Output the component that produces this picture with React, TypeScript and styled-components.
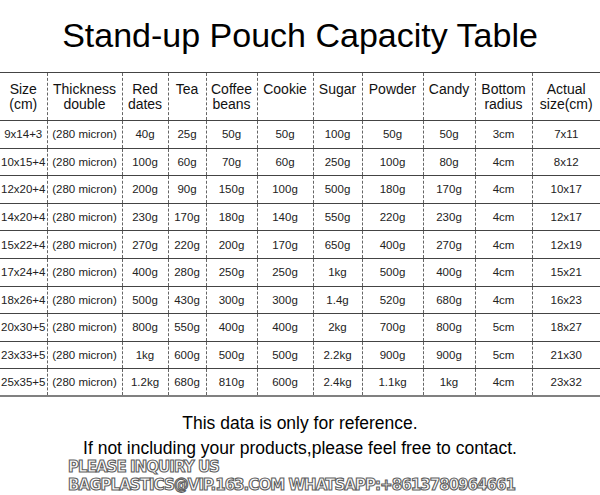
import React from 'react';
import styled, { createGlobalStyle } from 'styled-components';

const GlobalStyle = createGlobalStyle`
  html, body {
    margin: 0;
    padding: 0;
    background: #ffffff;
  }
  body {
    font-family: 'Liberation Sans', Arial, sans-serif;
    color: #111;
  }
`;

const Page = styled.div`
  width: 600px;
  height: 495px;
  overflow: hidden;
`;

const Title = styled.h1`
  margin: 0;
  padding-top: 15px;
  height: 57px;
  font-size: 34px;
  line-height: 40px;
  font-weight: normal;
  text-align: center;
  color: #000;
`;

const Table = styled.table`
  width: 600px;
  table-layout: fixed;
  border-collapse: collapse;
  border-top: 1px solid #444;
  border-bottom: 2px solid #808080;
`;

const HeadRow = styled.tr`
  height: 48px;
`;

const Row = styled.tr`
  height: 27.6px;
`;

const HeadCell = styled.th<{ $first?: boolean }>`
  padding: 9px 0 0;
  vertical-align: top;
  font-size: 14px;
  line-height: 15px;
  font-weight: normal;
  color: #111;
  text-align: center;
  border-left: ${(p) => (p.$first ? 'none' : '1px dashed #666')};
  border-bottom: 1px solid #444;
  white-space: nowrap;
`;

const Cell = styled.td<{ $first?: boolean }>`
  padding: 0;
  font-size: 11.5px;
  line-height: 14px;
  color: #222;
  text-align: center;
  vertical-align: middle;
  white-space: nowrap;
  border-left: ${(p) => (p.$first ? 'none' : '1px dashed #666')};
  border-top: 1px solid #444;
`;

const Notes = styled.div`
  margin-top: 17px;
  display: flex;
  flex-direction: column;
  align-items: center;
  gap: 7px;
`;

const Note = styled.p`
  margin: 0;
  font-size: 17.5px;
  line-height: 18px;
  color: #000;
`;

const Watermark = styled.div`
  margin-top: 3px;
  padding-left: 68px;
  display: flex;
  flex-direction: column;
  align-items: flex-start;
  gap: 4px;
`;

const MarkLine = styled.span`
  font-family: 'DejaVu Sans', sans-serif;
  font-weight: bold;
  font-size: 15px;
  line-height: 14px;
  letter-spacing: -0.95px;
  color: #ffffff;
  -webkit-text-stroke: 1.1px #5f5f5f;
  white-space: nowrap;
`;

const widths = [47, 75, 46, 38, 51, 56, 49, 61, 52, 57, 68];

const headers = [
  ['Size', '(cm)'],
  ['Thickness', 'double'],
  ['Red', 'dates'],
  ['Tea'],
  ['Coffee', 'beans'],
  ['Cookie'],
  ['Sugar'],
  ['Powder'],
  ['Candy'],
  ['Bottom', 'radius'],
  ['Actual', 'size(cm)'],
];

const rows = [
  ['9x14+3', '40g', '25g', '50g', '50g', '100g', '50g', '50g', '3cm', '7x11'],
  ['10x15+4', '100g', '60g', '70g', '60g', '250g', '100g', '80g', '4cm', '8x12'],
  ['12x20+4', '200g', '90g', '150g', '100g', '500g', '180g', '170g', '4cm', '10x17'],
  ['14x20+4', '230g', '170g', '180g', '140g', '550g', '220g', '230g', '4cm', '12x17'],
  ['15x22+4', '270g', '220g', '200g', '170g', '650g', '400g', '270g', '4cm', '12x19'],
  ['17x24+4', '400g', '280g', '250g', '250g', '1kg', '500g', '400g', '4cm', '15x21'],
  ['18x26+4', '500g', '430g', '300g', '300g', '1.4g', '520g', '680g', '4cm', '16x23'],
  ['20x30+5', '800g', '550g', '400g', '400g', '2kg', '700g', '800g', '5cm', '18x27'],
  ['23x33+5', '1kg', '600g', '500g', '500g', '2.2kg', '900g', '900g', '5cm', '21x30'],
  ['25x35+5', '1.2kg', '680g', '810g', '600g', '2.4kg', '1.1kg', '1kg', '4cm', '23x32'],
];

const App: React.FC = () => {
  return (
    <Page>
      <GlobalStyle />
      <Title>Stand-up Pouch Capacity Table</Title>
      <Table>
        <colgroup>
          {widths.map((w, i) => (
            <col key={i} style={{ width: w }} />
          ))}
        </colgroup>
        <thead>
          <HeadRow>
            {headers.map((h, i) => (
              <HeadCell key={i} $first={i === 0}>
                {h.map((line, j) => (
                  <React.Fragment key={j}>
                    {j > 0 && <br />}
                    {line}
                  </React.Fragment>
                ))}
              </HeadCell>
            ))}
          </HeadRow>
        </thead>
        <tbody>
          {rows.map((r, i) => (
            <Row key={i}>
              <Cell $first>{r[0]}</Cell>
              <Cell>(280 micron)</Cell>
              {r.slice(1).map((v, j) => (
                <Cell key={j}>{v}</Cell>
              ))}
            </Row>
          ))}
        </tbody>
      </Table>
      <Notes>
        <Note>This data is only for reference.</Note>
        <Note>If not including your products,please feel free to contact.</Note>
      </Notes>
      <Watermark>
        <MarkLine>PLEASE INQUIRY US</MarkLine>
        <MarkLine>BAGPLASTICS@VIP.163.COM WHATSAPP:+8613780964661</MarkLine>
      </Watermark>
    </Page>
  );
};

export default App;
